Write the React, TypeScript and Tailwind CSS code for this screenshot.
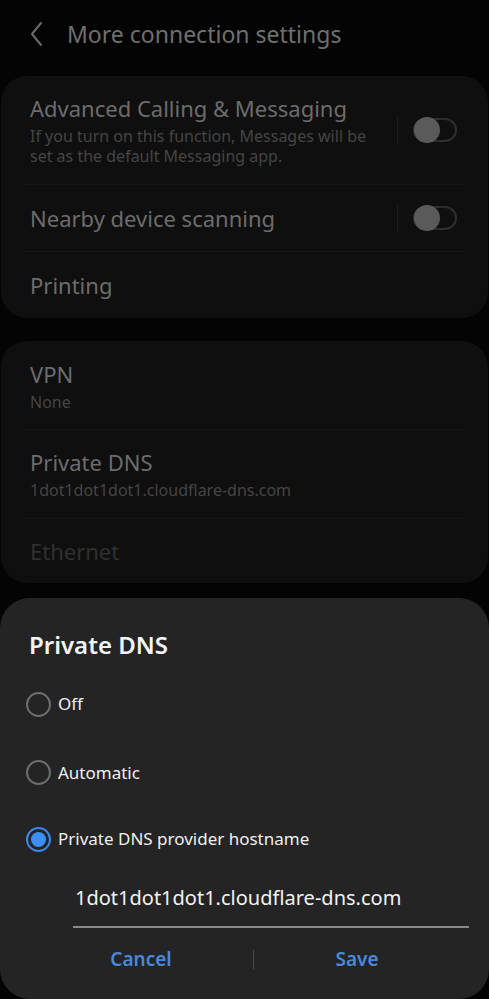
import React from "react";

const font = { fontFamily: '"Noto Sans", "Open Sans", Roboto, sans-serif' };

function Toggle() {
  return (
    <div className="flex items-center gap-[15px]">
      <div className="w-px h-[27px] bg-[#1e1e1e]" />
      <div className="relative w-[44px] h-[24px] rounded-full border-2 border-[#2e2e2e]">
        <div className="absolute left-[-1px] top-[-3px] w-[26px] h-[26px] rounded-full bg-[#5a5a5a]" />
      </div>
    </div>
  );
}

function Radio({ checked }: { checked?: boolean }) {
  if (checked) {
    return (
      <div className="w-[25px] h-[25px] rounded-full border-2 border-[#3f86e8] flex items-center justify-center">
        <div className="w-[15px] h-[15px] rounded-full bg-[#3d8ff8]" />
      </div>
    );
  }
  return <div className="w-[25px] h-[25px] rounded-full border-2 border-[#6e6e6e]" />;
}

export default function App() {
  return (
    <div className="w-[489px] h-[999px] bg-[#040404] overflow-hidden flex flex-col relative" style={font}>
      {/* header */}
      <div className="h-[76px] flex items-start pt-[17px]">
        <svg width="16" height="26" viewBox="0 0 16 26" className="ml-[29px] mt-[4px]">
          <path d="M12 2 L3 13 L12 24" stroke="#6b6b6b" strokeWidth="2" fill="none" strokeLinecap="round" strokeLinejoin="round" />
        </svg>
        <div className="ml-[22px] text-[23px] leading-[34px] text-[#6f6f6f]">More connection settings</div>
      </div>

      {/* card 1 */}
      <div className="mx-[1px] rounded-[26px] bg-[#0f0f0f] flex flex-col">
        <div className="h-[108px] flex items-center pl-[29px] pr-[31px]">
          <div className="flex-1 flex flex-col">
            <div className="text-[22px] leading-[28px] text-[#6c6c6c]">Advanced Calling &amp; Messaging</div>
            <div className="mt-[4px] text-[16px] leading-[20px] text-[#454545]">
              If you turn on this function, Messages will be
              <br />
              set as the default Messaging app.
            </div>
          </div>
          <Toggle />
        </div>
        <div className="mx-[24px] h-px bg-[#171717]" />
        <div className="h-[66px] flex items-center pl-[29px] pr-[31px]">
          <div className="flex-1 text-[22px] leading-[28px] text-[#6c6c6c]">Nearby device scanning</div>
          <Toggle />
        </div>
        <div className="mx-[24px] h-px bg-[#171717]" />
        <div className="h-[66px] flex items-center pl-[29px]">
          <div className="text-[22px] leading-[28px] text-[#6c6c6c]">Printing</div>
        </div>
      </div>

      {/* card 2 */}
      <div className="mt-[23px] mx-[1px] rounded-[26px] bg-[#0f0f0f] flex flex-col">
        <div className="h-[88px] flex flex-col justify-center pl-[29px] pt-[2px]">
          <div className="text-[22px] leading-[28px] text-[#6c6c6c]">VPN</div>
          <div className="mt-[4px] text-[16px] leading-[20px] text-[#454545]">None</div>
        </div>
        <div className="mx-[24px] h-px bg-[#171717]" />
        <div className="h-[88px] flex flex-col justify-center pl-[29px]">
          <div className="text-[22px] leading-[28px] text-[#6c6c6c]">Private DNS</div>
          <div className="mt-[4px] text-[16px] leading-[20px] text-[#454545]">1dot1dot1dot1.cloudflare-dns.com</div>
        </div>
        <div className="mx-[24px] h-px bg-[#171717]" />
        <div className="h-[64px] flex items-center pl-[29px]">
          <div className="text-[22px] leading-[28px] text-[#303030]">Ethernet</div>
        </div>
      </div>

      {/* dialog */}
      <div className="absolute left-0 right-0 top-[598px] bottom-0 rounded-[30px] bg-[#242424] flex flex-col">
        <div className="pt-[30px] pl-[29px] text-[24px] leading-[34px] font-semibold text-[#f4f4f4]">Private DNS</div>
        <div className="mt-[11px] flex flex-col">
          <div className="h-[66px] flex items-center pl-[26px] gap-[7px] pb-[4px]">
            <Radio />
            <span className="text-[17px] text-[#f0f0f0]">Off</span>
          </div>
          <div className="h-[67px] flex items-center pl-[26px] gap-[7px]">
            <Radio />
            <span className="text-[17px] text-[#f0f0f0]">Automatic</span>
          </div>
          <div className="h-[66px] flex items-center pl-[26px] gap-[7px]">
            <Radio checked />
            <span className="text-[17px] text-[#f0f0f0]">Private DNS provider hostname</span>
          </div>
        </div>
        <div className="ml-[73px] mr-[20px] mt-[12px] pb-[14px] border-b-2 border-[#8a8a8a] pl-[2px]">
          <span className="text-[20px] leading-[28px] text-[#f2f2f2]">1dot1dot1dot1.cloudflare-dns.com</span>
        </div>
        <div className="ml-[29px] mt-[13px] flex items-center h-[36px]">
          <div className="w-[224px] text-center text-[19px] font-semibold text-[#4a88dc]">Cancel</div>
          <div className="w-px h-[19px] bg-[#4a4a4a]" />
          <div className="w-[206px] text-center text-[19px] font-semibold text-[#4a88dc]">Save</div>
        </div>
      </div>
    </div>
  );
}
